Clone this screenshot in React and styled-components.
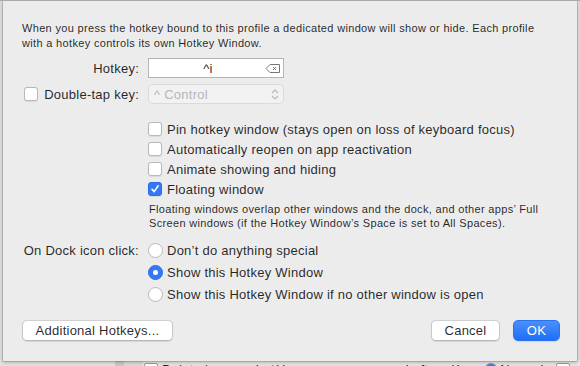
import React from 'react';
import styled, { createGlobalStyle, css } from 'styled-components';

const GlobalStyle = createGlobalStyle`
  html, body {
    margin: 0;
    padding: 0;
    background: #dcdcdc;
  }
  body {
    font-family: "Liberation Sans", Arial, sans-serif;
    font-size: 13px;
    letter-spacing: 0.25px;
    color: rgba(0, 0, 0, 0.85);
    -webkit-font-smoothing: antialiased;
  }
`;

const Screen = styled.div`
  display: flex;
  flex-direction: column;
  width: 580px;
  height: 366px;
  overflow: hidden;
  border-top: 1px solid #a9a9a9;
  box-sizing: border-box;
  background: #dadada;
`;

const Sheet = styled.div`
  display: flex;
  flex-direction: column;
  flex: none;
  box-sizing: border-box;
  width: 574px;
  height: 360px;
  margin-left: 3px;
  padding: 20px 17px 0 19px;
  background: #ececec;
  box-shadow: 0 0 0 1px rgba(0, 0, 0, 0.13), 0 2px 3px rgba(0, 0, 0, 0.18);
  position: relative;
  z-index: 1;
`;

const Description = styled.p`
  margin: 0;
  font-size: 11px;
  line-height: 15px;
  letter-spacing: 0.33px;
  white-space: nowrap;
`;

const FormRow = styled.div`
  display: grid;
  grid-template-columns: 117px 1fr;
  column-gap: 9px;
  align-items: ${({ $top }) => ($top ? 'start' : 'center')};
  margin-top: ${({ $mt }) => $mt || 0}px;
`;

const RowLabel = styled.label`
  display: flex;
  align-items: center;
  justify-content: flex-end;
  gap: 6px;
  height: ${({ $h }) => $h || 20}px;
  white-space: nowrap;
`;

const HotkeyField = styled.div`
  display: flex;
  align-items: center;
  box-sizing: border-box;
  width: 136px;
  height: 20px;
  background: #fff;
  border: 1px solid #b4b4b4;
  padding-right: 2px;
`;

const HotkeyValue = styled.span`
  flex: 1;
  text-align: center;
  font-size: 13px;
  padding-left: 2px;
`;

const PopupButton = styled.div`
  display: flex;
  align-items: center;
  box-sizing: border-box;
  width: 136px;
  height: 20px;
  padding: 0 4px 0 5px;
  border: 1px solid #dadada;
  border-radius: 5px;
  background: #f2f2f2;
  color: #b6b6b6;
  font-size: 13px;

  span {
    flex: 1;
  }
`;

const OptionList = styled.div`
  display: flex;
  flex-direction: column;
`;

const OptionRow = styled.label`
  display: flex;
  align-items: center;
  gap: ${({ $gap }) => $gap || 5}px;
  height: ${({ $h }) => $h || 20}px;
  white-space: nowrap;
`;

const CheckBox = styled.span`
  display: inline-flex;
  align-items: center;
  justify-content: center;
  flex: none;
  box-sizing: border-box;
  width: 14px;
  height: 14px;
  border-radius: 3px;
  background: #fff;
  border: 1px solid #b8b8b8;
  box-shadow: 0 0.5px 1px rgba(0, 0, 0, 0.08);

  ${({ $checked }) =>
    $checked &&
    css`
      background: #3478f6;
      border-color: #2a6ee8;
    `}
`;

const Radio = styled.span`
  display: inline-flex;
  align-items: center;
  justify-content: center;
  flex: none;
  box-sizing: border-box;
  width: 15px;
  height: 15px;
  border-radius: 50%;
  background: #fff;
  border: 1px solid #b8b8b8;

  ${({ $checked }) =>
    $checked &&
    css`
      background: #3478f6;
      border-color: #2a6ee8;

      &::after {
        content: '';
        width: 5px;
        height: 5px;
        border-radius: 50%;
        background: #fff;
      }
    `}
`;

const Note = styled.p`
  margin: 3px 0 0 1px;
  font-size: 11px;
  line-height: 14px;
  letter-spacing: 0.33px;
  white-space: nowrap;
`;

const ButtonBar = styled.div`
  display: flex;
  align-items: center;
  margin-top: 15px;
  gap: 13px;

  & > :first-child {
    margin-right: auto;
  }
`;

const Button = styled.button`
  box-sizing: border-box;
  height: 21px;
  width: ${({ w }) => w}px;
  padding: 0;
  font-family: inherit;
  font-size: 13px;
  letter-spacing: 0.25px;
  color: rgba(0, 0, 0, 0.85);
  background: #fff;
  border: 1px solid #c8c8c8;
  border-top-color: #d0d0d0;
  border-bottom-color: #b8b8b8;
  border-radius: 5px;
  box-shadow: 0 0.5px 1px rgba(0, 0, 0, 0.1);

  ${({ $primary }) =>
    $primary &&
    css`
      color: #fff;
      border-color: #2b72f0;
      background: linear-gradient(#4a8ffb, #1f6ff6);
    `}
`;

const BackRow = styled.div`
  display: flex;
  align-items: flex-start;
  height: 6px;
  margin-top: -1px;
  background: #e4e4e4;
  font-size: 13px;
  line-height: 15px;
  overflow: hidden;
`;

const BackGutter = styled.div`
  width: ${({ w }) => w}px;
  height: 100%;
  flex: none;
  background: ${({ bg }) => bg};
`;

const BackText = styled.span`
  margin-left: ${({ ml }) => ml}px;
  padding-top: 2px;
  white-space: nowrap;
`;

const BackBox = styled.span`
  display: inline-block;
  flex: none;
  width: ${({ w }) => w}px;
  height: 12px;
  margin: 3px 0 0 ${({ ml }) => ml}px;
  border: 1px solid #9c9c9c;
  border-radius: ${({ round }) => (round ? '50%' : '2px')};
  background: ${({ bg }) => bg || '#fff'};
`;

function DeleteIcon() {
  return (
    <svg width="16" height="11" viewBox="0 0 16 11">
      <path d="M1 5.5 L5 1.5 H14.5 V9.5 H5 Z" fill="none" stroke="#777" strokeWidth="1" />
      <path d="M8 4 L11 7 M11 4 L8 7" stroke="#777" strokeWidth="1" />
    </svg>
  );
}

function Chevrons() {
  return (
    <svg width="8" height="13" viewBox="0 0 8 13">
      <path d="M1 5 L4 2 L7 5 M1 8 L4 11 L7 8" fill="none" stroke="#b8b8b8" strokeWidth="1.2" />
    </svg>
  );
}

function Check() {
  return (
    <svg width="10" height="10" viewBox="0 0 10 10">
      <path d="M2 5.3 L4.2 7.6 L8.2 1.8" fill="none" stroke="#fff" strokeWidth="1.6" strokeLinecap="round" strokeLinejoin="round" />
    </svg>
  );
}

const checkOptions = [
  { label: 'Pin hotkey window (stays open on loss of keyboard focus)', checked: false },
  { label: 'Automatically reopen on app reactivation', checked: false },
  { label: 'Animate showing and hiding', checked: false },
  { label: 'Floating window', checked: true },
];

const dockOptions = [
  { label: 'Don’t do anything special', checked: false },
  { label: 'Show this Hotkey Window', checked: true },
  { label: 'Show this Hotkey Window if no other window is open', checked: false },
];

export default function App() {
  return (
    <>
      <GlobalStyle />
      <Screen>
        <Sheet>
          <Description>
            When you press the hotkey bound to this profile a dedicated window will show or hide. Each profile
            <br />
            with a hotkey controls its own Hotkey Window.
          </Description>

          <FormRow $mt={7}>
            <RowLabel>Hotkey:</RowLabel>
            <HotkeyField>
              <HotkeyValue>^i</HotkeyValue>
              <DeleteIcon />
            </HotkeyField>
          </FormRow>

          <FormRow $mt={6}>
            <RowLabel>
              <CheckBox />
              Double-tap key:
            </RowLabel>
            <PopupButton>
              <span>^ Control</span>
              <Chevrons />
            </PopupButton>
          </FormRow>

          <FormRow $mt={15}>
            <div />
            <div>
              <OptionList>
                {checkOptions.map((o) => (
                  <OptionRow key={o.label}>
                    <CheckBox $checked={o.checked}>{o.checked && <Check />}</CheckBox>
                    {o.label}
                  </OptionRow>
                ))}
              </OptionList>
              <Note>
                Floating windows overlap other windows and the dock, and other apps’ Full
                <br />
                Screen windows (if the Hotkey Window’s Space is set to All Spaces).
              </Note>
            </div>
          </FormRow>

          <FormRow $mt={9} $top>
            <RowLabel $h={22}>On Dock icon click:</RowLabel>
            <OptionList>
              {dockOptions.map((o) => (
                <OptionRow key={o.label} $h={22} $gap={4}>
                  <Radio $checked={o.checked} />
                  {o.label}
                </OptionRow>
              ))}
            </OptionList>
          </FormRow>

          <ButtonBar>
            <Button w={151}>Additional Hotkeys...</Button>
            <Button w={69}>Cancel</Button>
            <Button w={47} $primary>
              OK
            </Button>
          </ButtonBar>
        </Sheet>

        <BackRow>
          <BackGutter w={115} bg="#e2e2e2" />
          <BackGutter w={9} bg="#c9c9c9" />
          <BackGutter w={18} bg="#d9d9d9" />
          <BackBox w={12} ml={2} />
          <BackText ml={4}>Delete key sends ^H</BackText>
          <BackText ml={120}>Left ⌥ Key:</BackText>
          <BackBox w={12} ml={6} round bg="#3478f6" />
          <BackText ml={2}>Normal</BackText>
          <BackBox w={12} ml={12} />
        </BackRow>
      </Screen>
    </>
  );
}
